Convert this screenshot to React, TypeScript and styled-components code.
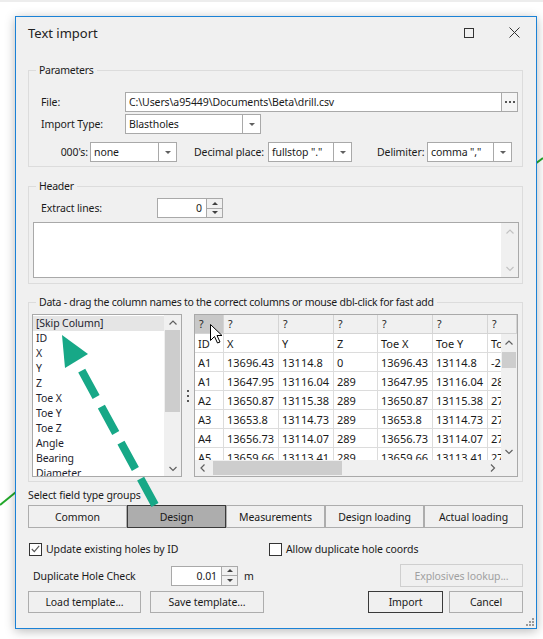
import React from "react";
import styled, { createGlobalStyle } from "styled-components";

const GlobalStyle = createGlobalStyle`
  html, body { margin: 0; padding: 0; background: #ffffff; }
  #root { width: 543px; height: 639px; }
`;

const FONT = `"Noto Sans", "Liberation Sans", Arial, sans-serif`;

const Desktop = styled.div`
  position: relative;
  width: 543px;
  height: 639px;
  box-sizing: border-box;
  overflow: hidden;
  background: linear-gradient(#ededed 0 2px, #ffffff 2px);
  padding: 16px 0 0 15px;
  font-family: ${FONT};
`;

const Backdrop = styled.svg`
  position: absolute;
  left: 0;
  top: 0;
  width: 543px;
  height: 639px;
  z-index: 0;
`;

const Overlay = styled.svg`
  position: absolute;
  left: 0;
  top: 0;
  width: 543px;
  height: 639px;
  z-index: 5;
  pointer-events: none;
`;

const Dialog = styled.div`
  position: relative;
  z-index: 1;
  width: 522px;
  height: 613px;
  box-sizing: border-box;
  border: 1px solid #1b82d6;
  background: #f0f0f0;
  box-shadow: 0 2px 10px rgba(0, 0, 0, 0.28);
  display: flex;
  flex-direction: column;
  font-size: 10.5px;
  letter-spacing: -0.1px;
  color: #1a1a1a;
`;

const TitleBar = styled.div`
  height: 31px;
  display: flex;
  align-items: center;
  flex-shrink: 0;
`;

const Title = styled.div`
  flex: 1;
  padding-left: 12px;
  padding-top: 1px;
  font-size: 13px;
  letter-spacing: 0;
  color: #222;
`;

const CaptionButton = styled.div<{ $w: number }>`
  width: ${(p) => p.$w}px;
  height: 31px;
  display: flex;
  align-items: center;
  justify-content: center;
`;

const Content = styled.div`
  flex: 1;
  display: flex;
  flex-direction: column;
  padding: 15px 13px 0 12px;
`;

const Group = styled.fieldset<{ $mt?: number }>`
  margin: ${(p) => p.$mt ?? 0}px 0 0 0;
  padding: 0;
  border: 1px solid #dcdcdc;
  min-width: 0;
`;

const Legend = styled.legend`
  padding: 0 3px;
  margin-left: 7px;
  line-height: 14px;
  font-size: 10.5px;
  letter-spacing: -0.25px;
  color: #1a1a1a;
`;

const GroupBody = styled.div<{ $pad: string }>`
  padding: ${(p) => p.$pad};
  display: flex;
  flex-direction: column;
`;

const FormRow = styled.div<{ $mt?: number }>`
  display: flex;
  align-items: center;
  height: 20px;
  margin-top: ${(p) => p.$mt ?? 0}px;
`;

const FieldLabel = styled.span<{ $w?: number; $right?: boolean; $ml?: number; $mr?: number }>`
  width: ${(p) => (p.$w ? `${p.$w}px` : "auto")};
  margin-left: ${(p) => p.$ml ?? 0}px;
  margin-right: ${(p) => p.$mr ?? 0}px;
  text-align: ${(p) => (p.$right ? "right" : "left")};
  white-space: nowrap;
  flex-shrink: 0;
`;

const TextBox = styled.div<{ $w: number }>`
  width: ${(p) => p.$w}px;
  height: 20px;
  box-sizing: border-box;
  border: 1px solid #a9a9a9;
  background: #fff;
  padding: 0 3px;
  line-height: 18px;
  white-space: nowrap;
  overflow: hidden;
  flex-shrink: 0;
`;

const BrowseButton = styled.div`
  width: 16px;
  height: 20px;
  box-sizing: border-box;
  border: 1px solid #a9a9a9;
  border-left: none;
  background: #f5f5f5;
  display: flex;
  align-items: center;
  justify-content: center;
  gap: 2px;
`;

const Dot = styled.span`
  width: 2px;
  height: 2px;
  background: #555;
`;

const ComboBox = styled.div<{ $w: number }>`
  width: ${(p) => p.$w}px;
  height: 20px;
  box-sizing: border-box;
  border: 1px solid #a9a9a9;
  background: #fff;
  display: flex;
  flex-shrink: 0;
`;

const ComboText = styled.div`
  flex: 1;
  padding-left: 3px;
  line-height: 18px;
  white-space: nowrap;
  overflow: hidden;
`;

const ComboDrop = styled.div`
  width: 17px;
  border-left: 1px solid #a9a9a9;
  display: flex;
  align-items: center;
  justify-content: center;
`;

const DownTri = styled.span`
  width: 0;
  height: 0;
  border-left: 3px solid transparent;
  border-right: 3px solid transparent;
  border-top: 3px solid #606060;
`;

const SpinWrap = styled.div`
  display: flex;
  height: 20px;
  flex-shrink: 0;
`;

const SpinInput = styled.div<{ $w: number }>`
  width: ${(p) => p.$w}px;
  box-sizing: border-box;
  border: 1px solid #a9a9a9;
  background: #fff;
  text-align: right;
  padding-right: 4px;
  line-height: 18px;
`;

const SpinButtons = styled.div`
  width: 16px;
  box-sizing: border-box;
  border: 1px solid #a9a9a9;
  border-left: none;
  display: flex;
  flex-direction: column;
  background: #f0f0f0;
`;

const SpinHalf = styled.div`
  flex: 1;
  display: flex;
  align-items: center;
  justify-content: center;
  & + & {
    border-top: 1px solid #a9a9a9;
  }
`;

const UpTri = styled.span`
  width: 0;
  height: 0;
  border-left: 3px solid transparent;
  border-right: 3px solid transparent;
  border-bottom: 3px solid #404040;
`;

const SmallDownTri = styled(DownTri)`
  border-top-color: #404040;
`;

const Memo = styled.div`
  margin-top: 4px;
  height: 56px;
  box-sizing: border-box;
  border: 1px solid #a9a9a9;
  background: #fff;
  display: flex;
  justify-content: flex-end;
`;

const VTrack = styled.div<{ $w?: number }>`
  width: ${(p) => p.$w ?? 17}px;
  background: #f0f0f0;
  display: flex;
  flex-direction: column;
  align-items: stretch;
  flex-shrink: 0;
`;

const ArrowCell = styled.div<{ $h?: number }>`
  height: ${(p) => p.$h ?? 16}px;
  display: flex;
  align-items: center;
  justify-content: center;
  flex-shrink: 0;
`;

const TrackFill = styled.div`
  flex: 1;
`;

const Thumb = styled.div`
  background: #cdcdcd;
`;

const DataArea = styled.div`
  display: flex;
  height: 163px;
`;

const ListBox = styled.div`
  width: 150px;
  box-sizing: border-box;
  border: 1px solid #a9a9a9;
  background: #fff;
  display: flex;
  flex-shrink: 0;
`;

const ListItems = styled.div`
  flex: 1;
  padding-top: 1px;
  overflow: hidden;
`;

const ListItem = styled.div<{ $active?: boolean }>`
  height: 15px;
  line-height: 15px;
  padding-left: 3px;
  white-space: nowrap;
  background: ${(p) => (p.$active ? "#e5e5e5" : "transparent")};
  color: #1e1e2e;
`;

const Splitter = styled.div`
  width: 12px;
  display: flex;
  flex-direction: column;
  align-items: center;
  justify-content: center;
  gap: 3px;
  flex-shrink: 0;
`;

const GridBox = styled.div`
  flex: 1;
  box-sizing: border-box;
  border: 1px solid #a9a9a9;
  display: flex;
  flex-direction: column;
  overflow: hidden;
  background: #f0f0f0;
`;

const QRow = styled.div`
  display: flex;
  height: 19px;
  flex-shrink: 0;
  box-sizing: border-box;
  border-bottom: 1px solid #d4d4d4;
`;

const QCell = styled.div<{ $w?: number; $hot?: boolean }>`
  width: ${(p) => (p.$w ? `${p.$w}px` : "auto")};
  flex: ${(p) => (p.$w ? "0 0 auto" : "1")};
  box-sizing: border-box;
  border-right: 1px solid #d4d4d4;
  background: ${(p) => (p.$hot ? "#c8c8c8" : "#f0f0f0")};
  padding-left: 4px;
  line-height: 18px;
`;

const GridMiddle = styled.div`
  flex: 1;
  display: flex;
  min-height: 0;
`;

const Viewport = styled.div`
  flex: 1;
  overflow: hidden;
  background: #fff;
`;

const GRow = styled.div`
  display: flex;
  height: 19px;
  box-sizing: border-box;
  border-bottom: 1px solid #dcdcdc;
`;

const GCell = styled.div<{ $w: number }>`
  width: ${(p) => p.$w}px;
  flex-shrink: 0;
  box-sizing: border-box;
  border-right: 1px solid #dcdcdc;
  padding-left: 3px;
  line-height: 19px;
  font-size: 11px;
  letter-spacing: 0;
  white-space: nowrap;
  overflow: hidden;
`;

const HScrollRow = styled.div`
  height: 16px;
  display: flex;
  flex-shrink: 0;
`;

const HTrack = styled.div`
  flex: 1;
  display: flex;
  align-items: stretch;
`;

const HArrow = styled.div`
  width: 16px;
  display: flex;
  align-items: center;
  justify-content: center;
  flex-shrink: 0;
`;

const HFill = styled.div`
  flex: 1;
  display: flex;
  align-items: center;
`;

const Corner = styled.div`
  width: 16px;
  background: #f0f0f0;
`;

const SectionLabel = styled.div`
  margin-top: 6px;
  line-height: 14px;
  white-space: nowrap;
`;

const TypeBar = styled.div`
  margin-top: 3px;
  height: 23px;
  display: flex;
`;

const TypeButton = styled.div<{ $selected?: boolean }>`
  flex: 1;
  box-sizing: border-box;
  border: 1px solid ${(p) => (p.$selected ? "#3a3a3a" : "#adadad")};
  background: ${(p) => (p.$selected ? "#adadad" : "#f0f0f0")};
  display: flex;
  align-items: center;
  justify-content: center;
`;

const BottomRow = styled.div<{ $mt: number; $pl: number; $h: number }>`
  margin-top: ${(p) => p.$mt}px;
  padding-left: ${(p) => p.$pl}px;
  height: ${(p) => p.$h}px;
  display: flex;
  align-items: center;
`;

const CheckItem = styled.label<{ $w?: number }>`
  display: flex;
  align-items: center;
  gap: 4px;
  width: ${(p) => (p.$w ? `${p.$w}px` : "auto")};
  white-space: nowrap;
`;

const CheckBoxSquare = styled.span`
  width: 13px;
  height: 13px;
  box-sizing: border-box;
  border: 1px solid #333;
  background: #fff;
  display: flex;
  align-items: center;
  justify-content: center;
`;

const Spacer = styled.div`
  flex: 1;
`;

const PushButton = styled.div<{ $w: number; $default?: boolean; $disabled?: boolean; $ml?: number }>`
  width: ${(p) => p.$w}px;
  height: 100%;
  margin-left: ${(p) => p.$ml ?? 0}px;
  box-sizing: border-box;
  border: 1px solid ${(p) => (p.$default ? "#3a3a3a" : p.$disabled ? "#cfcfcf" : "#adadad")};
  background: #f0f0f0;
  color: ${(p) => (p.$disabled ? "#a0a0a0" : "#1a1a1a")};
  display: flex;
  align-items: center;
  justify-content: center;
  white-space: nowrap;
  flex-shrink: 0;
`;

const Grip = styled.svg`
  position: absolute;
  right: 1px;
  bottom: 1px;
`;

function Chevron({ dir, color = "#606060" }: { dir: "up" | "down" | "left" | "right"; color?: string }) {
  const pts = {
    up: "0.5,4.5 4,1 7.5,4.5",
    down: "0.5,1 4,4.5 7.5,1",
    left: "4.5,0.5 1,4 4.5,7.5",
    right: "1,0.5 4.5,4 1,7.5",
  }[dir];
  const horiz = dir === "up" || dir === "down";
  return (
    <svg width={horiz ? 8 : 6} height={horiz ? 6 : 8} viewBox={horiz ? "0 0 8 6" : "0 0 6 8"}>
      <polyline points={pts} fill="none" stroke={color} strokeWidth="1.2" />
    </svg>
  );
}

function Combo({ w, value }: { w: number; value: string }) {
  return (
    <ComboBox $w={w}>
      <ComboText>{value}</ComboText>
      <ComboDrop>
        <DownTri />
      </ComboDrop>
    </ComboBox>
  );
}

function Spin({ w, value }: { w: number; value: string }) {
  return (
    <SpinWrap>
      <SpinInput $w={w}>{value}</SpinInput>
      <SpinButtons>
        <SpinHalf>
          <UpTri />
        </SpinHalf>
        <SpinHalf>
          <SmallDownTri />
        </SpinHalf>
      </SpinButtons>
    </SpinWrap>
  );
}

function Check({ checked, label, w }: { checked?: boolean; label: string; w?: number }) {
  return (
    <CheckItem $w={w}>
      <CheckBoxSquare>
        {checked && (
          <svg width="9" height="8" viewBox="0 0 9 8">
            <polyline points="0.8,4 3.3,6.6 8.2,0.8" fill="none" stroke="#555" strokeWidth="1.1" />
          </svg>
        )}
      </CheckBoxSquare>
      {label}
    </CheckItem>
  );
}

const listItems = ["[Skip Column]", "ID", "X", "Y", "Z", "Toe X", "Toe Y", "Toe Z", "Angle", "Bearing", "Diameter"];

const colWidths = [29, 55, 55, 44, 55, 55, 55];
const colNames = ["ID", "X", "Y", "Z", "Toe X", "Toe Y", "Toe Z"];
const rows = [
  ["A1", "13696.43", "13114.8", "0", "13696.43", "13114.8", "-20.5"],
  ["A1", "13647.95", "13116.04", "289", "13647.95", "13116.04", "281.3"],
  ["A2", "13650.87", "13115.38", "289", "13650.87", "13115.38", "275.1"],
  ["A3", "13653.8", "13114.73", "289", "13653.8", "13114.73", "275.6"],
  ["A4", "13656.73", "13114.07", "289", "13656.73", "13114.07", "276.2"],
  ["A5", "13659.66", "13113.41", "289", "13659.66", "13113.41", "276.8"],
];

const fieldGroups = ["Common", "Design", "Measurements", "Design loading", "Actual loading"];

export default function App() {
  return (
    <Desktop>
      <GlobalStyle />
      <Backdrop viewBox="0 0 543 639">
        <line x1="0" y1="505" x2="16" y2="492" stroke="#22a82a" strokeWidth="2" />
        <line x1="535" y1="164" x2="543" y2="158" stroke="#22a82a" strokeWidth="2" />
      </Backdrop>

      <Dialog>
        <TitleBar>
          <Title>Text import</Title>
          <CaptionButton $w={46}>
            <svg width="10" height="10" viewBox="0 0 10 10">
              <rect x="0.5" y="0.5" width="9" height="9" fill="none" stroke="#333" strokeWidth="1" />
            </svg>
          </CaptionButton>
          <CaptionButton $w={44}>
            <svg width="11" height="11" viewBox="0 0 11 11">
              <path d="M0.5 0.5 L10.5 10.5 M10.5 0.5 L0.5 10.5" stroke="#333" strokeWidth="1" />
            </svg>
          </CaptionButton>
        </TitleBar>

        <Content>
          <Group>
            <Legend>Parameters</Legend>
            <GroupBody $pad="15px 4px 4px 12px">
              <FormRow>
                <FieldLabel $w={84}>File:</FieldLabel>
                <TextBox $w={377}>C:\Users\a95449\Documents\Beta\drill.csv</TextBox>
                <BrowseButton>
                  <Dot />
                  <Dot />
                  <Dot />
                </BrowseButton>
              </FormRow>
              <FormRow $mt={2}>
                <FieldLabel $w={84}>Import Type:</FieldLabel>
                <Combo w={136} value="Blastholes" />
              </FormRow>
              <FormRow $mt={8}>
                <FieldLabel $w={47} $right $mr={2}>
                  000's:
                </FieldLabel>
                <Combo w={87} value="none" />
                <FieldLabel $w={74} $ml={17}>
                  Decimal place:
                </FieldLabel>
                <Combo w={84} value={'fullstop "."'} />
                <FieldLabel $w={50} $ml={25}>
                  Delimiter:
                </FieldLabel>
                <Combo w={85} value={'comma ","'} />
              </FormRow>
            </GroupBody>
          </Group>

          <Group $mt={12}>
            <Legend>Header</Legend>
            <GroupBody $pad="5px 3px 5px 4px">
              <FormRow>
                <FieldLabel $w={116} $ml={8}>
                  Extract lines:
                </FieldLabel>
                <Spin w={50} value="0" />
              </FormRow>
              <Memo>
                <VTrack>
                  <ArrowCell $h={17}>
                    <Chevron dir="up" color="#c2c2c2" />
                  </ArrowCell>
                  <TrackFill />
                  <ArrowCell $h={17}>
                    <Chevron dir="down" color="#c2c2c2" />
                  </ArrowCell>
                </VTrack>
              </Memo>
            </GroupBody>
          </Group>

          <Group $mt={11}>
            <Legend>Data - drag the column names to the correct columns or mouse dbl-click for fast add</Legend>
            <GroupBody $pad="5px 4px 4px 3px">
              <DataArea>
                <ListBox>
                  <ListItems>
                    {listItems.map((item, i) => (
                      <ListItem key={item} $active={i === 0}>
                        {item}
                      </ListItem>
                    ))}
                  </ListItems>
                  <VTrack>
                    <ArrowCell $h={15}>
                      <Chevron dir="up" />
                    </ArrowCell>
                    <TrackFill>
                      <Thumb style={{ height: 82, marginLeft: 1, marginRight: 1 }} />
                    </TrackFill>
                    <ArrowCell $h={15}>
                      <Chevron dir="down" />
                    </ArrowCell>
                  </VTrack>
                </ListBox>

                <Splitter>
                  <Dot />
                  <Dot />
                  <Dot />
                </Splitter>

                <GridBox>
                  <QRow>
                    {colWidths.slice(0, 6).map((w, i) => (
                      <QCell key={i} $w={w} $hot={i === 0}>
                        ?
                      </QCell>
                    ))}
                    <QCell>?</QCell>
                  </QRow>
                  <GridMiddle>
                    <Viewport>
                      <GRow>
                        {colNames.map((n, i) => (
                          <GCell key={n} $w={colWidths[i]}>
                            {n}
                          </GCell>
                        ))}
                      </GRow>
                      {rows.map((r, ri) => (
                        <GRow key={ri}>
                          {r.map((v, ci) => (
                            <GCell key={ci} $w={colWidths[ci]}>
                              {v}
                            </GCell>
                          ))}
                        </GRow>
                      ))}
                    </Viewport>
                    <VTrack $w={16}>
                      <ArrowCell $h={18}>
                        <Chevron dir="up" />
                      </ArrowCell>
                      <TrackFill>
                        <Thumb style={{ height: 16, marginLeft: 1, marginRight: 1 }} />
                      </TrackFill>
                      <ArrowCell $h={16}>
                        <Chevron dir="down" />
                      </ArrowCell>
                    </VTrack>
                  </GridMiddle>
                  <HScrollRow>
                    <HTrack>
                      <HArrow>
                        <Chevron dir="left" />
                      </HArrow>
                      <HFill>
                        <Thumb style={{ width: 129, height: 14, marginLeft: 2 }} />
                      </HFill>
                      <HArrow>
                        <Chevron dir="right" />
                      </HArrow>
                    </HTrack>
                    <Corner />
                  </HScrollRow>
                </GridBox>
              </DataArea>
            </GroupBody>
          </Group>

          <SectionLabel>Select field type groups</SectionLabel>
          <TypeBar>
            {fieldGroups.map((g) => (
              <TypeButton key={g} $selected={g === "Design"}>
                {g}
              </TypeButton>
            ))}
          </TypeBar>

          <BottomRow $mt={14} $pl={1} $h={14}>
            <Check checked label="Update existing holes by ID" w={240} />
            <Check label="Allow duplicate hole coords" />
          </BottomRow>

          <BottomRow $mt={8} $pl={5} $h={23}>
            <FieldLabel $w={138}>Duplicate Hole Check</FieldLabel>
            <Spin w={51} value="0.01" />
            <FieldLabel $ml={6}>m</FieldLabel>
            <Spacer />
            <PushButton $w={123} $disabled>
              Explosives lookup...
            </PushButton>
          </BottomRow>

          <BottomRow $mt={4} $pl={0} $h={22}>
            <PushButton $w={113}>Load template...</PushButton>
            <PushButton $w={114} $ml={9}>
              Save template...
            </PushButton>
            <Spacer />
            <PushButton $w={75} $default>
              Import
            </PushButton>
            <PushButton $w={74} $ml={6}>
              Cancel
            </PushButton>
          </BottomRow>
        </Content>

        <Grip width="9" height="9" viewBox="0 0 9 9">
          {[
            [6, 0],
            [3, 3],
            [6, 3],
            [0, 6],
            [3, 6],
            [6, 6],
          ].map(([x, y], i) => (
            <rect key={i} x={x} y={y} width="2" height="2" fill="#9a9a9a" />
          ))}
        </Grip>
      </Dialog>

      <Overlay viewBox="0 0 543 639">
        <line
          x1="155"
          y1="505"
          x2="77"
          y2="362"
          stroke="#17a887"
          strokeWidth="8"
          strokeDasharray="30 11"
        />
        <polygon points="62,335 88,354 65,368" fill="#17a887" />
        <path
          d="M210.5 324.5 L210.5 340.5 L214.5 336.5 L217.5 343 L220 342 L217 335.5 L222 335.5 Z"
          fill="#fff"
          stroke="#000"
          strokeWidth="1"
          strokeLinejoin="round"
        />
      </Overlay>
    </Desktop>
  );
}
